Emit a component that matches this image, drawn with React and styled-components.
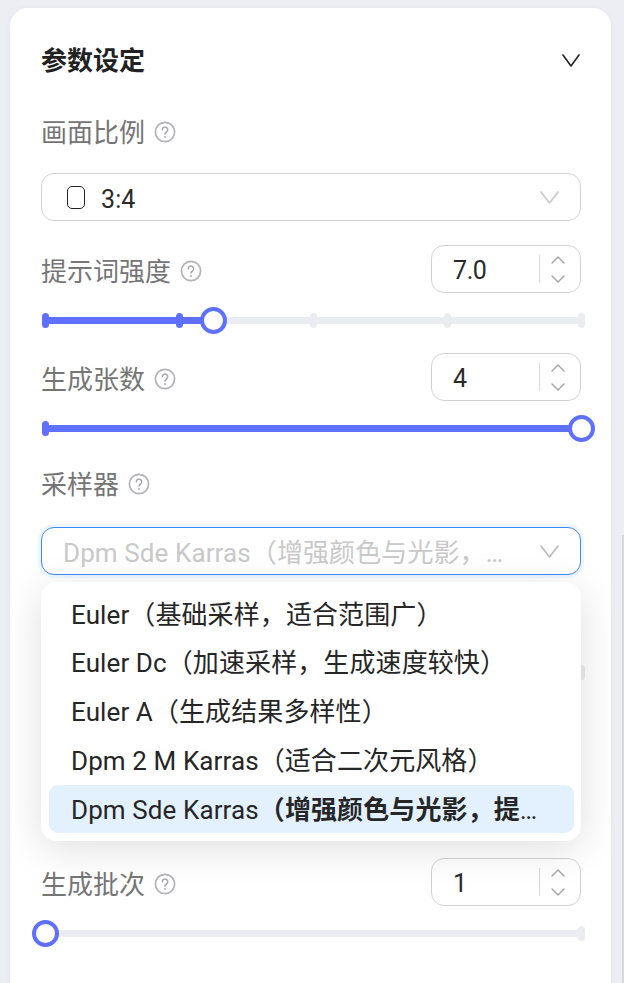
import React from "react";
import styled, { createGlobalStyle } from "styled-components";

const FONT = `"Noto Sans", "Noto Sans CJK SC", sans-serif`;
const VALUE_FONT = `Roboto, "Noto Sans CJK SC", sans-serif`;

const Global = createGlobalStyle`
  html, body { margin: 0; padding: 0; height: 100%; overflow: hidden; background: #eceef3; }
  #root { height: 100%; }
  * { box-sizing: border-box; }
`;

const Page = styled.div`
  height: 983px;
  padding: 8px 13px 0 10px;
  font-family: ${FONT};
  overflow: hidden;
`;

const Gutter = styled.div`
  position: fixed;
  right: 0;
  top: 535px;
  bottom: 0;
  width: 2px;
  background: #d8d9df;
`;

const Card = styled.div`
  height: 1100px;
  padding: 34px 30px 0 31px;
  background: #fff;
  border-radius: 18px;
  box-shadow: 0 0 6px rgba(40, 50, 80, 0.04);
  overflow: hidden;
`;

const TitleRow = styled.div`
  height: 36px;
  display: flex;
  align-items: center;
  justify-content: space-between;
  padding-right: 1px;
`;

const Title = styled.div`
  font-size: 26px;
  font-weight: 700;
  color: #222;
  line-height: 36px;
`;

const Row = styled.div`
  height: ${(p) => p.$h || 48}px;
  margin-top: ${(p) => p.$mt}px;
  display: flex;
  align-items: center;
  justify-content: space-between;
`;

const Label = styled.div`
  display: flex;
  align-items: center;
  gap: 9px;
  padding-top: ${(p) => p.$pt}px;
  font-size: 26px;
  line-height: 36px;
  color: #757575;
`;

const SelectBox = styled.div`
  height: 48px;
  margin-top: ${(p) => p.$mt}px;
  display: flex;
  align-items: center;
  padding: 0 21px 0 ${(p) => p.$pl}px;
  gap: ${(p) => p.$gap}px;
  background: #fff;
  border: 1px solid ${(p) => (p.$focus ? "#3d8bfa" : "#d2d2d6")};
  border-radius: 13px;
  box-shadow: ${(p) => (p.$focus ? "0 0 0 3px #eef6ff" : "none")};
`;

const SelectValue = styled.div`
  flex: 1;
  min-width: 0;
  font-family: ${VALUE_FONT};
  font-size: ${(p) => p.$size}px;
  letter-spacing: 0.1px;
  line-height: 36px;
  padding-top: ${(p) => p.$pt}px;
  color: ${(p) => p.$color || "#2a2a2a"};
  white-space: nowrap;
  overflow: hidden;
  text-overflow: ellipsis;
`;

const RatioIcon = styled.div`
  width: 18px;
  height: 23px;
  flex: none;
  border: 1.5px solid #222;
  border-radius: 5px;
`;

const NumberBox = styled.div`
  width: 150px;
  height: 48px;
  display: flex;
  align-items: center;
  background: #fff;
  border: 1px solid #d2d2d6;
  border-radius: 13px;
`;

const NumberValue = styled.div`
  width: 107px;
  padding: 4px 0 0 21px;
  font-family: ${VALUE_FONT};
  font-size: 25px;
  letter-spacing: -0.4px;
  color: #2a2a2a;
  line-height: 28px;
`;

const Stepper = styled.div`
  flex: 1;
  height: 28px;
  display: flex;
  flex-direction: column;
  align-items: center;
  justify-content: space-between;
  border-left: 1.5px solid #d8d8d8;
  padding: 1px 0 0;
  margin-right: 4px;
`;

const SliderWrap = styled.div`
  position: relative;
  height: 26px;
  margin: ${(p) => p.$mt ?? 14}px 0 0 4px;
  width: 536px;
`;

const Track = styled.div`
  position: absolute;
  left: 0;
  right: 0;
  top: 9.5px;
  height: 7px;
  background: #ebecf2;
`;

const Fill = styled.div`
  position: absolute;
  left: 0;
  top: 9.5px;
  height: 7px;
  background: #5f70ff;
`;

const Tick = styled.div`
  position: absolute;
  top: 5.5px;
  width: 7px;
  height: 15px;
  margin-left: -3.5px;
  border-radius: 3.5px;
  background: ${(p) => (p.$on ? "#5f70ff" : "#ebecf2")};
`;

const Thumb = styled.div`
  position: absolute;
  top: -0.5px;
  width: 27px;
  height: 27px;
  margin-left: -13.5px;
  border-radius: 50%;
  background: #fff;
  border: 4.5px solid #5f70ff;
`;

const Anchor = styled.div`
  position: relative;
`;

const Dropdown = styled.div`
  position: absolute;
  left: 0;
  right: 0;
  top: 55px;
  height: 259px;
  padding: 8px 7px 7px 8px;
  background: #fff;
  border-radius: 15px;
  box-shadow: 0 8px 40px rgba(0, 0, 0, 0.13);
  z-index: 2;
`;

const Option = styled.div`
  height: 48px;
  margin-bottom: 0.75px;
  padding: 2.5px 18px 0 22px;
  border-radius: 9px;
  font-family: ${VALUE_FONT};
  font-size: 26px;
  letter-spacing: 0.1px;
  line-height: 45.5px;
  color: #262626;
  white-space: nowrap;
  overflow: hidden;
  text-overflow: ellipsis;
  background: ${(p) => (p.$active ? "#e3f1ff" : "transparent")};
`;

const BoldPart = styled.span`
  font-weight: 700;
`;

const Chevron = ({ w = 18, h = 12, color = "#222", up = false, sw = 1.6 }) => (
  <svg width={w} height={h} viewBox={`0 0 ${w} ${h}`} fill="none" style={{ flex: "none" }}>
    <polyline
      points={
        up
          ? `1,${h - 1} ${w / 2},1 ${w - 1},${h - 1}`
          : `1,1 ${w / 2},${h - 1} ${w - 1},1`
      }
      stroke={color}
      strokeWidth={sw}
      strokeLinecap="round"
      strokeLinejoin="round"
    />
  </svg>
);

const Help = () => (
  <svg width="22" height="22" viewBox="0 0 22 22" fill="none" style={{ flex: "none" }}>
    <circle cx="11" cy="11" r="9.6" stroke="#b3b3b8" strokeWidth="1.7" />
    <path
      d="M8.3 8.7a2.7 2.7 0 1 1 4.2 2.3c-.9.5-1.5 1-1.5 2.1"
      stroke="#a5a5aa"
      strokeWidth="1.5"
      strokeLinecap="round"
    />
    <circle cx="11" cy="16" r="0.9" fill="#a5a5aa" />
  </svg>
);

const NumberInput = ({ value }) => (
  <NumberBox>
    <NumberValue>{value}</NumberValue>
    <Stepper>
      <Chevron w={14} h={8} up color="#a3a3a3" sw={1.4} />
      <Chevron w={14} h={8} color="#a3a3a3" sw={1.4} />
    </Stepper>
  </NumberBox>
);

const Slider = ({ pct, ticks = [0, 100], mt, hideThumb }) => (
  <SliderWrap $mt={mt}>
    <Track />
    <Fill style={{ width: `${pct}%` }} />
    {ticks.map((t) => (
      <Tick key={t} $on={t <= pct && pct > 0} style={{ left: `${t}%` }} />
    ))}
    {!hideThumb && <Thumb style={{ left: `${pct}%` }} />}
  </SliderWrap>
);

const options = [
  "Euler（基础采样，适合范围广）",
  "Euler Dc（加速采样，生成速度较快）",
  "Euler A（生成结果多样性）",
  "Dpm 2 M Karras（适合二次元风格）",
];

export default function App() {
  return (
    <Page>
      <Global />
      <Gutter />
      <Card>
        <TitleRow>
          <Title>参数设定</Title>
          <Chevron w={18} h={13} color="#222" />
        </TitleRow>

        <Row $mt={36} $h={36}>
          <Label $pt={0}>画面比例<Help /></Label>
        </Row>
        <SelectBox $mt={23} $pl={25} $gap={16}>
          <RatioIcon />
          <SelectValue $size={25} $pt={6}>3:4</SelectValue>
          <Chevron w={19} h={13} color="#c9c9c9" />
        </SelectBox>

        <Row $mt={24}>
          <Label $pt={4}>提示词强度<Help /></Label>
          <NumberInput value="7.0" />
        </Row>
        <Slider pct={31.5} ticks={[0, 25, 50, 75, 100]} />

        <Row $mt={20}>
          <Label $pt={4}>生成张数<Help /></Label>
          <NumberInput value="4" />
        </Row>
        <Slider pct={100} />

        <Row $mt={25} $h={36}>
          <Label $pt={0}>采样器<Help /></Label>
        </Row>
        <Anchor>
          <SelectBox $mt={25} $pl={21} $gap={28} $focus>
            <SelectValue $size={26} $pt={4} $color="#c9c9c9">Dpm Sde Karras（增强颜色与光影，提升细节）</SelectValue>
            <Chevron w={19} h={13} color="#b9b9b9" />
          </SelectBox>
          <Dropdown>
            {options.map((o) => (
              <Option key={o}>{o}</Option>
            ))}
            <Option $active>
              Dpm Sde Karras<BoldPart>（增强颜色与光影，提升细节）</BoldPart>
            </Option>
          </Dropdown>
        </Anchor>

        <Slider pct={0} mt={84} hideThumb />

        <Row $mt={173}>
          <Label $pt={3}>生成批次<Help /></Label>
          <NumberInput value="1" />
        </Row>
        <Slider pct={0} />
      </Card>
    </Page>
  );
}
